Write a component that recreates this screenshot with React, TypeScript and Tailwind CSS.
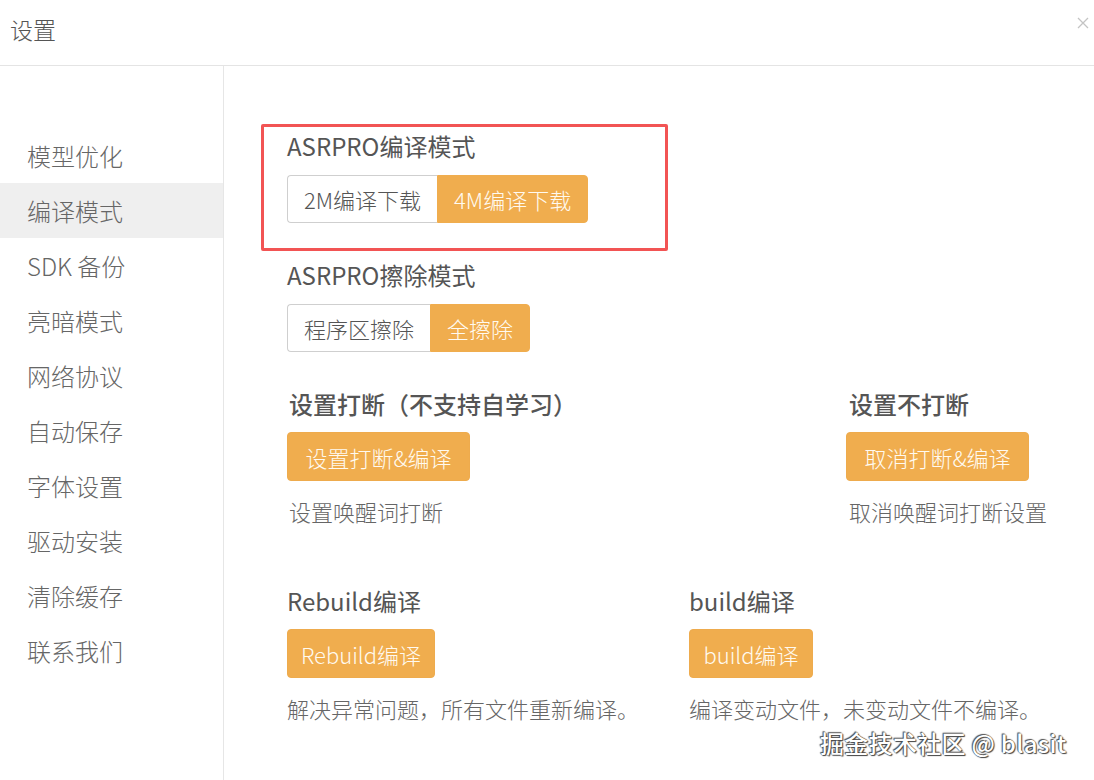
import React from 'react';

const font = { fontFamily: '"Noto Sans CJK SC", "Noto Sans", sans-serif' };

const menu = ['模型优化', '编译模式', 'SDK 备份', '亮暗模式', '网络协议', '自动保存', '字体设置', '驱动安装', '清除缓存', '联系我们'];

const OrangeButton: React.FC<{ label: string; w: string }> = ({ label, w }) => (
  <button className={`${w} h-[49px] rounded-[4px] bg-[#f0ad4e] border border-[#eeab4d] text-[22px] text-[#fffaf0] leading-none font-light`}>
    {label}
  </button>
);

const Group: React.FC<{ left: string; right: string }> = ({ left, right }) => (
  <div className="flex">
    <button className="h-[48px] px-[16px] rounded-l-[4px] border border-[#cfcfcf] border-r-0 bg-white text-[22px] text-[#555] leading-none font-light">
      {left}
    </button>
    <button className="h-[48px] px-[16px] rounded-r-[4px] border border-[#f0ad4e] bg-[#f0ad4e] text-[22px] text-[#fffaf0] leading-none font-light">
      {right}
    </button>
  </div>
);

const Title: React.FC<{ children: React.ReactNode; bold?: boolean }> = ({ children, bold }) => (
  <div className={`text-[24px] leading-[28px] ${bold ? 'font-medium text-[#555]' : 'text-[#555]'}`}>{children}</div>
);

const Desc: React.FC<{ children: React.ReactNode }> = ({ children }) => (
  <div className="mt-[16px] text-[22px] leading-[28px] text-[#666] font-light">{children}</div>
);

export default function App() {
  return (
    <div className="relative w-[1094px] h-[780px] bg-white overflow-hidden flex flex-col" style={font}>
      {/* Header */}
      <div className="h-[66px] shrink-0 border-b border-[#e4e4e4] flex items-center justify-between pl-[10px] pr-[4px]">
        <div className="text-[23px] text-[#555] font-light -mt-[6px]">设置</div>
        <svg width="14" height="14" viewBox="0 0 14 14" className="-mt-[20px]">
          <path d="M2 2 L12 12 M12 2 L2 12" stroke="#c4c4c4" strokeWidth="1.3" />
        </svg>
      </div>

      <div className="flex flex-1">
        {/* Sidebar */}
        <div className="w-[224px] shrink-0 border-r border-[#e6e6e6] pt-[62px]">
          {menu.map((m, i) => (
            <div
              key={m}
              className={`h-[55px] flex items-center pl-[27px] text-[24px] text-[#666] font-light ${i === 1 ? 'bg-[#efefef]' : ''}`}
            >
              {m}
            </div>
          ))}
        </div>

        {/* Content */}
        <div className="flex-1 pl-[63px] pt-[66px]">
          <div className="relative">
            <div className="absolute -top-[8px] -left-[26px] w-[407px] h-[127px] border-[3px] border-[#f25454] rounded-[2px]" />
            <Title>ASRPRO编译模式</Title>
            <div className="mt-[15px]">
              <Group left="2M编译下载" right="4M编译下载" />
            </div>
          </div>

          <div className="mt-[38px]">
            <Title>ASRPRO擦除模式</Title>
            <div className="mt-[15px]">
              <Group left="程序区擦除" right="全擦除" />
            </div>
          </div>

          <div className="mt-[38px] flex">
            <div className="w-[559px] pl-[2px]">
              <Title bold>设置打断（不支持自学习）</Title>
              <div className="mt-[14px] -ml-[2px]">
                <OrangeButton label="设置打断&编译" w="w-[183px]" />
              </div>
              <Desc>设置唤醒词打断</Desc>
            </div>
            <div className="pl-[3px]">
              <Title bold>设置不打断</Title>
              <div className="mt-[14px] -ml-[3px]">
                <OrangeButton label="取消打断&编译" w="w-[183px]" />
              </div>
              <Desc>取消唤醒词打断设置</Desc>
            </div>
          </div>

          <div className="mt-[62px] flex">
            <div className="w-[402px]">
              <Title>Rebuild编译</Title>
              <div className="mt-[14px]">
                <OrangeButton label="Rebuild编译" w="w-[148px]" />
              </div>
              <Desc>解决异常问题，所有文件重新编译。</Desc>
            </div>
            <div>
              <Title>build编译</Title>
              <div className="mt-[14px]">
                <OrangeButton label="build编译" w="w-[124px]" />
              </div>
              <Desc>编译变动文件，未变动文件不编译。</Desc>
            </div>
          </div>
        </div>
      </div>

      {/* Watermark */}
      <div
        className="absolute left-[820px] top-[727px] text-[24px] leading-[32px] font-medium text-white tracking-[0.3px]"
        style={{ textShadow: '0 0 1px #333, 1px 1px 1px #444, -1px -1px 1px #555' }}
      >
        掘金技术社区 @ blasit
      </div>
    </div>
  );
}
